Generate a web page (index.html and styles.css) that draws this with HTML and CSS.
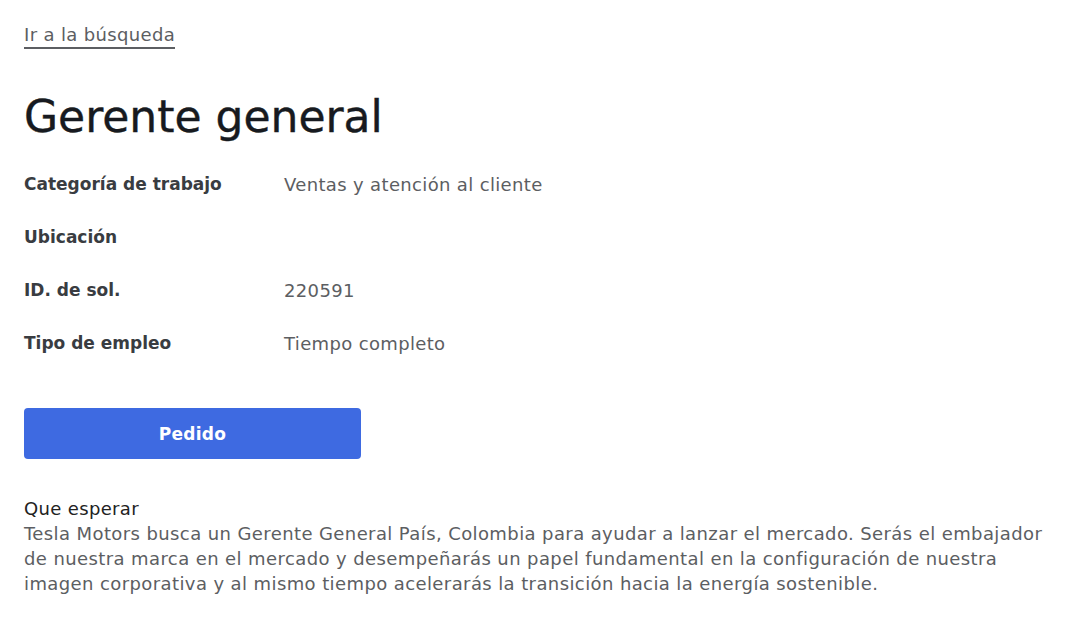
FILE: index.html
```html
<!DOCTYPE html>
<html lang="es">
<head>
<meta charset="utf-8">
<title>Gerente general</title>
<link rel="stylesheet" href="styles.css">
</head>
<body>
<main class="page">
  <a class="back-link" href="#">Ir a la búsqueda</a>
  <h1 class="title">Gerente general</h1>
  <dl class="details">
    <div class="row"><dt>Categoría de trabajo</dt><dd>Ventas y atención al cliente</dd></div>
    <div class="row"><dt>Ubicación</dt><dd></dd></div>
    <div class="row"><dt>ID. de sol.</dt><dd>220591</dd></div>
    <div class="row"><dt>Tipo de empleo</dt><dd>Tiempo completo</dd></div>
  </dl>
  <button class="apply" type="button">Pedido</button>
  <section class="expect">
    <h2 class="expect-title">Que esperar</h2>
    <p class="expect-text">Tesla Motors busca un Gerente General País, Colombia para ayudar a lanzar el mercado. Serás el embajador de nuestra marca en el mercado y desempeñarás un papel fundamental en la configuración de nuestra imagen corporativa y al mismo tiempo acelerarás la transición hacia la energía sostenible.</p>
  </section>
</main>
</body>
</html>
```
FILE: styles.css
```css
html, body {
  margin: 0;
  padding: 0;
  background: #ffffff;
}
body {
  font-family: "DejaVu Sans", "Open Sans", sans-serif;
  color: #393c41;
}
.page {
  padding: 23px 24px 0 24px;
  display: flex;
  flex-direction: column;
  align-items: flex-start;
}
.back-link {
  font-size: 18px;
  line-height: 24px;
  letter-spacing: 0.35px;
  color: #5c5e62;
  text-decoration: none;
  border-bottom: 2px solid #5c5e62;
}
.title {
  margin: 40px 0 0 0;
  font-size: 44px;
  line-height: 56px;
  font-weight: normal;
  letter-spacing: 0;
  color: #171a20;
  -webkit-text-stroke: 0.4px #171a20;
}
.details {
  margin: 27px 0 0 0;
  display: flex;
  flex-direction: column;
  gap: 29px;
}
.row {
  display: flex;
  align-items: center;
  height: 24px;
}
.row dt {
  width: 260px;
  font-size: 17px;
  font-weight: bold;
  color: #393c41;
}
.row dd {
  margin: 0;
  font-size: 18px;
  letter-spacing: 0.35px;
  color: #5c5e62;
}
.apply {
  margin-top: 53px;
  width: 337px;
  height: 51px;
  border: none;
  border-radius: 4px;
  background: #3e6ae1;
  color: #ffffff;
  font-family: inherit;
  font-size: 17px;
  font-weight: bold;
  letter-spacing: 0.3px;
  cursor: pointer;
}
.expect {
  margin-top: 37px;
}
.expect-title {
  margin: 0;
  font-size: 18px;
  line-height: 25px;
  letter-spacing: 0.35px;
  font-weight: normal;
  color: #222222;
}
.expect-text {
  margin: 0;
  max-width: 1040px;
  font-size: 18px;
  line-height: 25px;
  letter-spacing: 0.4px;
  color: #5c5e62;
}
```
